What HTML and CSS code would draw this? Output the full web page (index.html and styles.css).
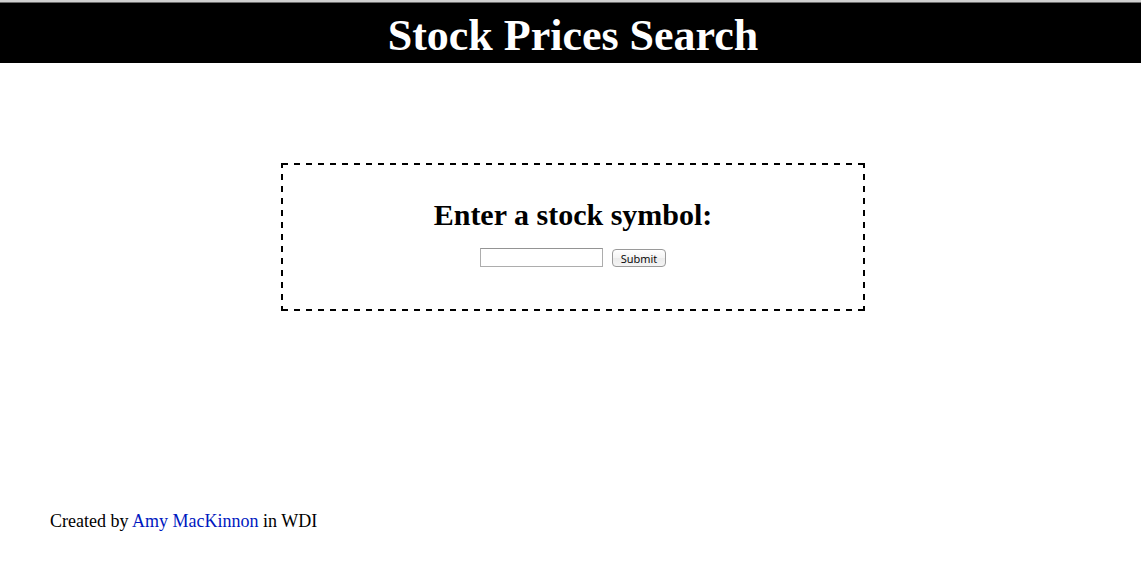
FILE: index.html
```html
<!DOCTYPE html>
<html lang="en">
<head>
<meta charset="utf-8">
<meta name="viewport" content="width=device-width, initial-scale=1">
<title>Stock Prices Search</title>
<link rel="stylesheet" href="styles.css">
</head>
<body class="page">
<header class="banner"><h1 class="banner-title">Stock Prices Search</h1></header>
<main class="content">
<form class="search">
<h2 class="search-title"><label for="symbol">Enter a stock symbol:</label></h2>
<div class="search-row">
<input class="search-input" id="symbol" name="symbol" type="text">
<button class="search-button" type="submit">Submit</button>
</div>
</form>
</main>
<footer class="credits">Created by <a class="credits-link" href="#">Amy MacKinnon</a> in WDI</footer>
</body>
</html>
```
FILE: styles.css
```css
* { box-sizing: border-box; }
.page {
  margin: 0;
  background: #fff;
  color: #000;
  font-family: "Liberation Serif", "Times New Roman", serif;
  font-size: 18px;
}
.banner {
  border-top: 2px solid #d0d0d0;
  background: #000;
  box-shadow: inset 0 1px #6c6c6c;
  color: #fff;
  padding: 10px 0 3px 5px;
  text-align: center;
}
.banner-title { margin: 0; font-size: 44px; line-height: 48px; }
.content { padding: 100px 0 0 5px; }
.search {
  --dash-x: linear-gradient(90deg, #000 6px, transparent 6px);
  --dash-y: linear-gradient(#000 6px, transparent 6px);
  width: 584px;
  max-width: 100%;
  margin: 0 auto;
  padding: 34px 18px 44px;
  background:
    var(--dash-x) 1px 0 / 12px 2px repeat-x,
    var(--dash-x) 1px 100% / 12px 2px repeat-x,
    var(--dash-y) 0 -1px / 2px 12px repeat-y,
    var(--dash-y) 100% -1px / 2px 12px repeat-y;
  text-align: center;
}
.search-title { margin: 0 0 15px; font-size: 30px; line-height: 36px; }
.search-row { display: flex; justify-content: center; align-items: flex-end; gap: 9px; }
.search-input {
  width: 123px;
  height: 19px;
  padding: 1px 3px;
  border: 1px solid #adadad;
  border-top-color: #949494;
  background: #fff;
  font-size: 11px;
}
.search-button {
  width: 54px;
  height: 18px;
  padding: 1px 0 0;
  border: 1px solid #9a9a9a;
  border-radius: 4px;
  background: linear-gradient(#fff, #f4f4f4 50%, #ebebeb 50%, #f4f4f4);
  color: #000;
  font: 11px/15px "Open Sans", sans-serif;
}
.credits { margin-top: 200px; padding: 0 50px 39px; line-height: 21px; }
.credits-link { color: #0018c0; text-decoration: none; }
```
